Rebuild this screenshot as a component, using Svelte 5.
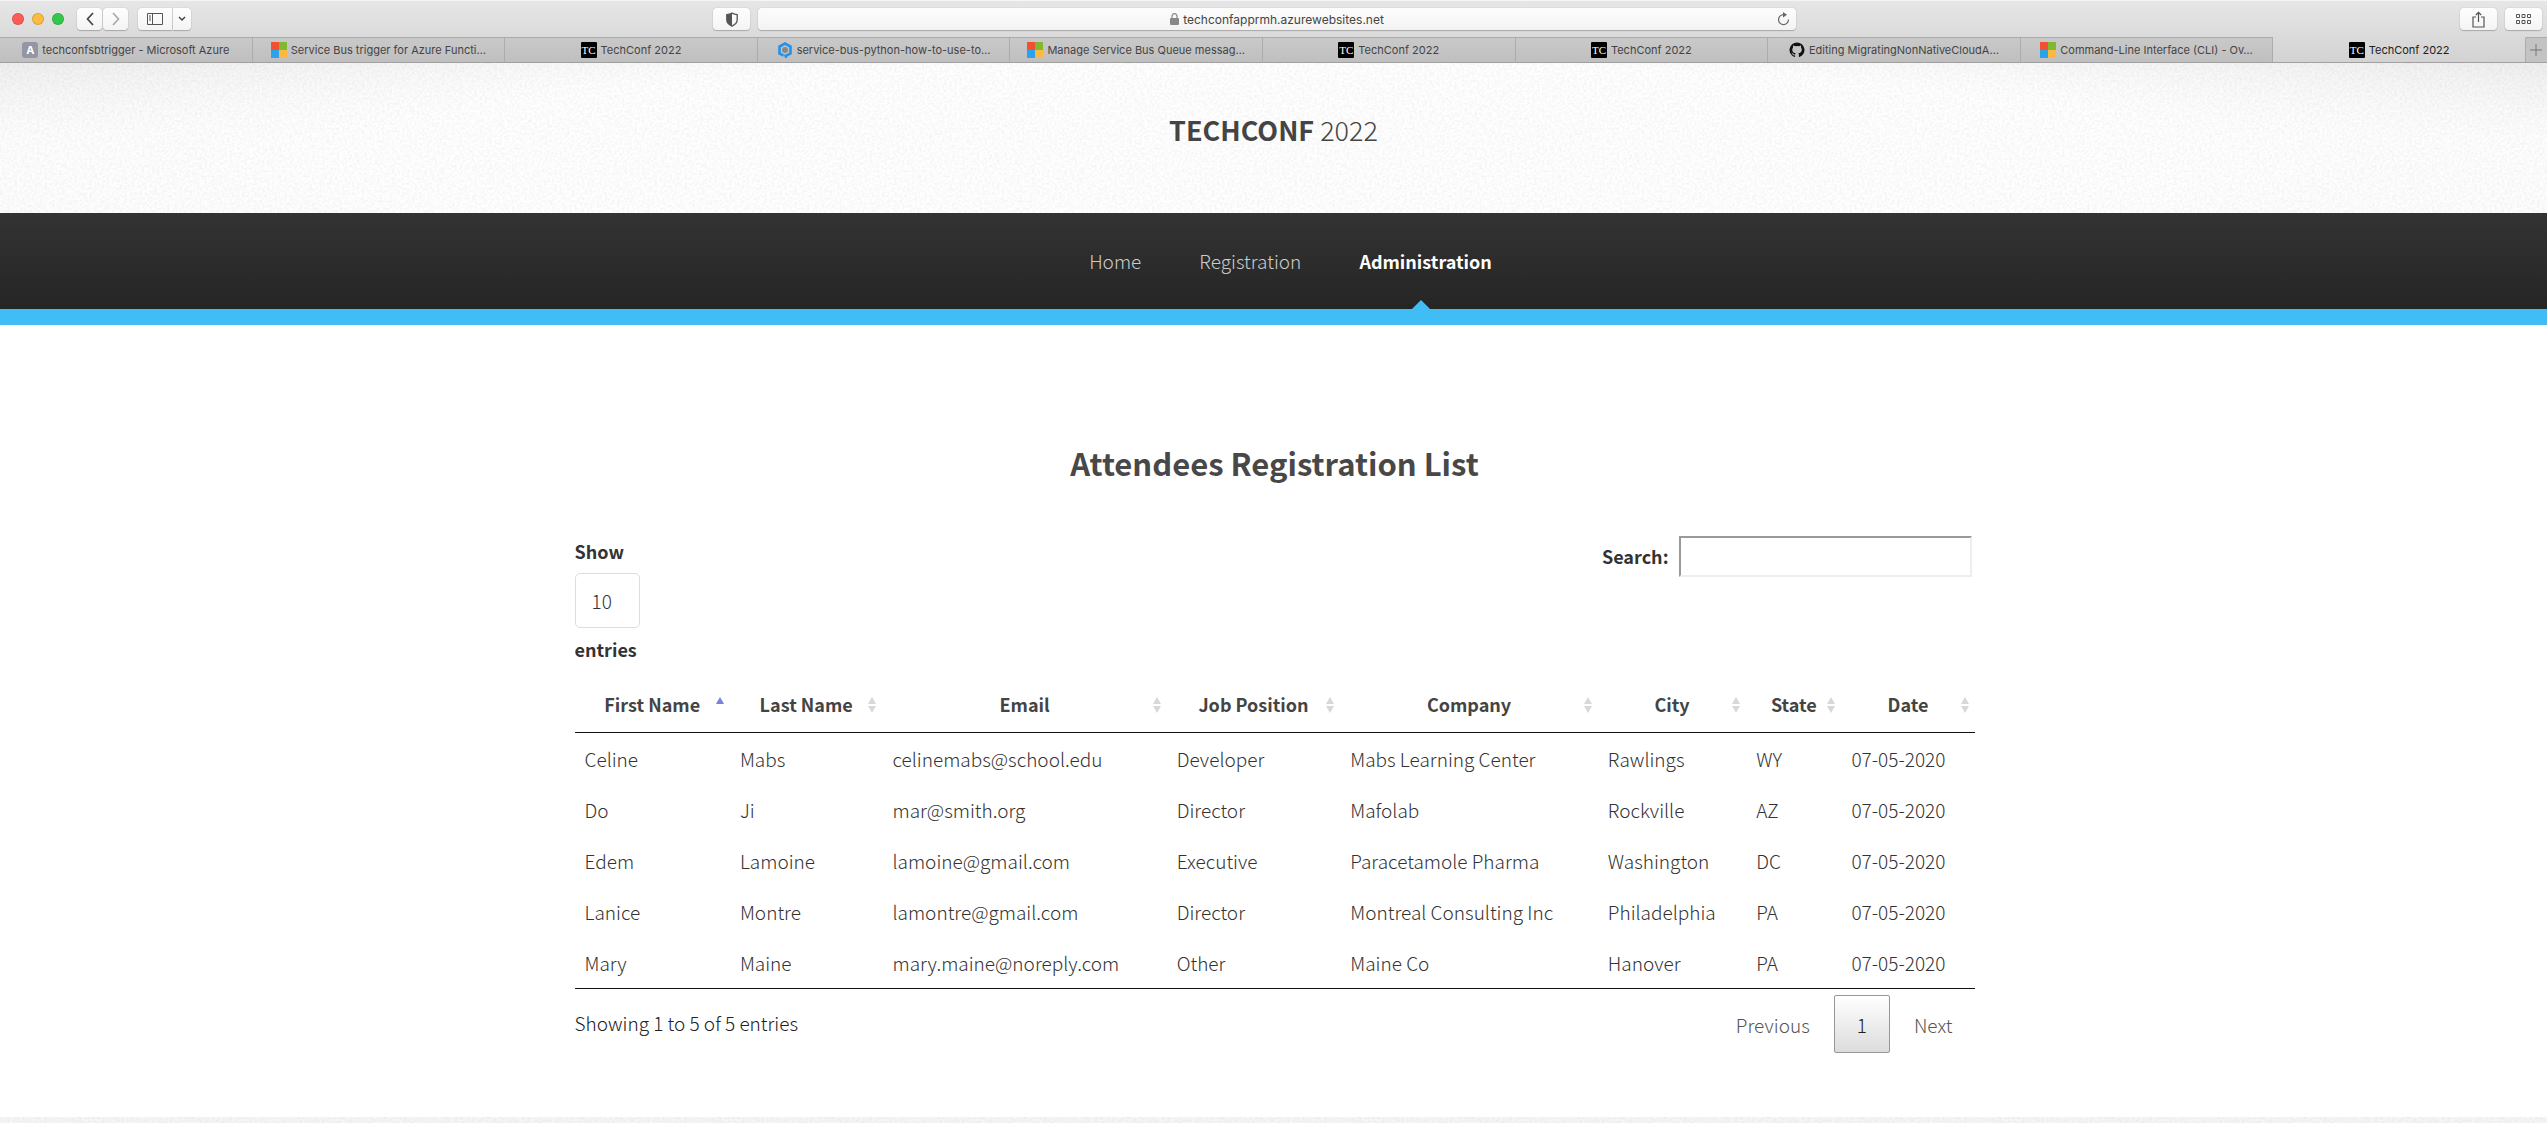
<script>
  const tabs = [
    { icon: 'azure', title: 'techconfsbtrigger - Microsoft Azure' },
    { icon: 'ms', title: 'Service Bus trigger for Azure Functi…' },
    { icon: 'tc', title: 'TechConf 2022' },
    { icon: 'q', title: 'service-bus-python-how-to-use-to…' },
    { icon: 'ms', title: 'Manage Service Bus Queue messag…' },
    { icon: 'tc', title: 'TechConf 2022' },
    { icon: 'tc', title: 'TechConf 2022' },
    { icon: 'gh', title: 'Editing MigratingNonNativeCloudA…' },
    { icon: 'ms', title: 'Command-Line Interface (CLI) - Ov…' },
    { icon: 'tc', title: 'TechConf 2022', active: true }
  ];

  const columns = [
    { key: 'first', label: 'First Name' },
    { key: 'last', label: 'Last Name' },
    { key: 'email', label: 'Email' },
    { key: 'job', label: 'Job Position' },
    { key: 'company', label: 'Company' },
    { key: 'city', label: 'City' },
    { key: 'state', label: 'State' },
    { key: 'date', label: 'Date' }
  ];

  const attendees = [
    { first: 'Celine', last: 'Mabs', email: 'celinemabs@school.edu', job: 'Developer', company: 'Mabs Learning Center', city: 'Rawlings', state: 'WY', date: '07-05-2020' },
    { first: 'Do', last: 'Ji', email: 'mar@smith.org', job: 'Director', company: 'Mafolab', city: 'Rockville', state: 'AZ', date: '07-05-2020' },
    { first: 'Edem', last: 'Lamoine', email: 'lamoine@gmail.com', job: 'Executive', company: 'Paracetamole Pharma', city: 'Washington', state: 'DC', date: '07-05-2020' },
    { first: 'Lanice', last: 'Montre', email: 'lamontre@gmail.com', job: 'Director', company: 'Montreal Consulting Inc', city: 'Philadelphia', state: 'PA', date: '07-05-2020' },
    { first: 'Mary', last: 'Maine', email: 'mary.maine@noreply.com', job: 'Other', company: 'Maine Co', city: 'Hanover', state: 'PA', date: '07-05-2020' }
  ];

  let sortKey = $state('first');
  let ascending = $state(true);
  let query = $state('');

  const rows = $derived(
    attendees
      .filter((a) => Object.values(a).join(' ').toLowerCase().includes(query.toLowerCase()))
      .sort((a, b) => a[sortKey].localeCompare(b[sortKey]) * (ascending ? 1 : -1))
  );

  function sortBy(key) {
    ascending = sortKey === key ? !ascending : true;
    sortKey = key;
  }
</script>

{#snippet grain(id)}
  <svg class="grain" aria-hidden="true">
    <filter {id} x="0" y="0" width="100%" height="100%">
      <feTurbulence type="fractalNoise" baseFrequency="0.4" numOctaves="2" seed="4" />
      <feColorMatrix values="0 0 0 0 0  0 0 0 0 0  0 0 0 0 0  0.09 0 0 0 -0.03" />
    </filter>
    <rect width="100%" height="100%" filter="url(#{id})" />
  </svg>
{/snippet}

<div class="browser">
  <div class="toolbar">
    <div class="tools">
      <div class="lights">
        <span class="light red"></span>
        <span class="light yellow"></span>
        <span class="light green"></span>
      </div>
      <div class="pair">
        <button class="tool narrow" aria-label="Back">
          <svg width="10" height="16" viewBox="0 0 10 16"><path d="M8 2 2.500 8 8 14" fill="none" stroke="#444" stroke-width="1.700" /></svg>
        </button>
        <button class="tool narrow" aria-label="Forward">
          <svg width="10" height="16" viewBox="0 0 10 16"><path d="M2 2 7.500 8 2 14" fill="none" stroke="#aaa" stroke-width="1.700" /></svg>
        </button>
      </div>
      <div class="joined">
        <button class="tool side" aria-label="Sidebar">
          <svg width="16" height="12" viewBox="0 0 16 12" fill="none" stroke="#555"><path d="M.5.5h15v11H.5zM5.500.5v11M2 3h2M2 5h2M2 7h2" /></svg>
        </button>
        <button class="tool drop" aria-label="Sidebar options">
          <svg width="8" height="6" viewBox="0 0 8 6"><path d="m1 1 3 3 3-3" fill="none" stroke="#444" stroke-width="1.500" /></svg>
        </button>
      </div>
      <button class="tool shield" aria-label="Privacy report">
        <svg width="14" height="15" viewBox="0 0 14 15"><path d="M7 1.200c2 1 3.500 1.300 5.200 1.400v5.500c0 2.600-2.200 4.700-5.200 6-3-1.300-5.200-3.400-5.200-6V2.600C3.500 2.500 5 2.200 7 1.200z" fill="none" stroke="#555" stroke-width="1.300" /><path d="M7 1.200v12.900c-3-1.300-5.200-3.400-5.200-6V2.600C3.500 2.500 5 2.200 7 1.200z" fill="#555" /></svg>
      </button>
    </div>
    <div class="address">
      <div class="url">
        <svg width="9" height="12" viewBox="0 0 9 12"><path d="M2 5.500V3.200a2.500 2.500 0 0 1 5 0v2.300" fill="none" stroke="#888" stroke-width="1.200" /><rect y="5" width="9" height="7" rx="1" fill="#888" /></svg>
        <span>techconfapprmh.azurewebsites.net</span>
      </div>
      <button class="reload" aria-label="Reload">
        <svg width="13" height="14" viewBox="0 0 13 14"><path d="M8 2.600H6.500a5 5 0 1 0 5 5" fill="none" stroke="#666" stroke-width="1.200" /><path d="M6 0l4 2.700-4 2.700z" fill="#666" /></svg>
      </button>
    </div>
    <div class="tools end">
      <button class="tool" aria-label="Share">
        <svg width="13" height="17" viewBox="0 0 13 17" fill="none" stroke="#555" stroke-width="1.200"><path d="M4 6H1v10h11V6H9M6.500 11V1.500M3.800 4l2.700-2.700L9.200 4" /></svg>
      </button>
      <button class="tool" aria-label="Tab overview">
        <svg width="15" height="10" viewBox="0 0 15 10" fill="none" stroke="#555"><path d="M.5.5h3v3h-3zM6 .5h3v3H6zM11.500.5h3v3h-3zM.5 6.500h3v3h-3zM6 6.500h3v3H6zM11.500 6.500h3v3h-3z" /></svg>
      </button>
    </div>
  </div>

  <div class="tabs">
    {#each tabs as tab}
      <button class="tab" class:active={tab.active}>
        {#if tab.icon === 'azure'}
          <span class="fav letter">A</span>
        {:else if tab.icon === 'tc'}
          <span class="fav tc">TC</span>
        {:else if tab.icon === 'ms'}
          <svg class="fav" viewBox="0 0 16 16"><path fill="#f25033" d="M0 0h8v8H0z" /><path fill="#7fb932" d="M8 0h8v8H8z" /><path fill="#2ba3ea" d="M0 8h8v8H0z" /><path fill="#fdb840" d="M8 8h8v8H8z" /></svg>
        {:else if tab.icon === 'q'}
          <svg class="fav" viewBox="0 0 16 16"><path fill="none" stroke="#2491eb" stroke-width="2.600" d="M6.500 13.700 2.500 11.500v-7L8 1.500l5.500 3v7L9.500 13.700" /><path d="M7 12.500h3V16H8z" fill="#2491eb" /><circle cx="8" cy="8" r="3" fill="#888" /></svg>
        {:else}
          <svg class="fav" viewBox="0 0 16 16"><path fill="#111" d="M8 .5a7.500 7.500 0 0 0-2.400 14.600c.4.100.500-.200.500-.400v-1.400c-2.100.5-2.500-.9-2.500-.9-.3-.9-.8-1.100-.8-1.100-.7-.5.100-.5.100-.5.700.1 1.100.8 1.100.8.700 1.200 1.800.8 2.200.6.100-.5.300-.8.500-1-1.700-.2-3.400-.8-3.400-3.700 0-.8.300-1.500.8-2-.1-.2-.3-1 .1-2 0 0 .6-.2 2 .8a7 7 0 0 1 3.700 0c1.400-1 2-.8 2-.8.4 1 .2 1.800.1 2 .5.5.8 1.200.8 2 0 2.900-1.800 3.500-3.400 3.700.300.2.5.7.5 1.400v2.100c0 .2.100.5.500.4A7.500 7.500 0 0 0 8 .5z" /></svg>
        {/if}
        <span class="name">{tab.title}</span>
      </button>
    {/each}
    <button class="add" aria-label="New tab">
      <svg width="12" height="12" viewBox="0 0 12 12"><path d="M6 0v12M0 6h12" stroke="#777" /></svg>
    </button>
  </div>
</div>

<div class="page">
  <header>
    {@render grain('grain-header')}
    <a class="logo" href="#home"><strong>TECHCONF</strong> 2022</a>
  </header>
  <nav>
    <a href="#home">Home</a>
    <a href="#registration">Registration</a>
    <a class="current" href="#administration">Administration</a>
  </nav>
  <div class="stripe"></div>

  <main>
    <h1>Attendees Registration List</h1>
    <div class="controls">
      <label class="length">
        <span>Show</span>
        <select><option>10</option><option>25</option><option>50</option><option>100</option></select>
        <span>entries</span>
      </label>
      <label class="search">
        <span>Search:</span>
        <input type="search" bind:value={query} />
      </label>
    </div>

    <table>
      <colgroup>
        {#each columns as column}<col class={column.key} />{/each}
      </colgroup>
      <thead>
        <tr>
          {#each columns as column}
            <th>
              <button class="sort" onclick={() => sortBy(column.key)}>
                {column.label}
                <svg class="arrows" viewBox="0 0 8 16" aria-hidden="true">
                  {#if sortKey === column.key}
                    <path d={ascending ? 'M0 7h8L4 0z' : 'M0 9h8l-4 7z'} fill="#7b81dc" />
                  {:else}
                    <path d="M0 7h8L4 0zM0 9h8l-4 7z" fill="#d8d8d8" />
                  {/if}
                </svg>
              </button>
            </th>
          {/each}
        </tr>
      </thead>
      <tbody>
        {#each rows as row}
          <tr>
            {#each columns as column}<td>{row[column.key]}</td>{/each}
          </tr>
        {/each}
      </tbody>
    </table>

    <div class="summary">
      <span class="info">Showing 1 to 5 of 5 entries</span>
      <div class="pager">
        <button>Previous</button>
        <button class="on">1</button>
        <button>Next</button>
      </div>
    </div>
  </main>
  <footer>{@render grain('grain-footer')}</footer>
</div>

<style>
  :global(body) {
    margin: 0;
    background: #fff;
  }
  :global(#app) {
    min-height: 100vh;
    display: flex;
    flex-direction: column;
  }
  * {
    box-sizing: border-box;
  }
  button {
    border: 0;
    margin: 0;
    padding: 0;
    background: none;
    font: inherit;
    color: inherit;
  }
  a {
    text-decoration: none;
  }

  .browser {
    font-family: Inter, 'Liberation Sans', sans-serif;
    font-size: 11px;
    color: #444;
    background: linear-gradient(#e6e6e6, #d2d2d2);
    border-top: 1px solid #f5f5f5;
  }
  .toolbar {
    height: 36px;
    display: grid;
    grid-template-columns: 1fr minmax(0, 1038px) 1fr;
    gap: 8px;
    align-items: center;
    padding: 0 5px 0 12px;
  }
  .tools {
    display: flex;
    align-items: center;
    gap: 10px;
  }
  .end {
    justify-content: flex-end;
    gap: 8px;
  }
  .lights {
    display: flex;
    gap: 8px;
    margin-right: 3px;
  }
  .light {
    width: 12px;
    height: 12px;
    border-radius: 50%;
    border: 1px solid #0002;
  }
  .red { background: #fc5b57; }
  .yellow { background: #fdbc40; }
  .green { background: #34c84a; }
  .pair {
    display: flex;
    gap: 1px;
  }
  .joined {
    display: flex;
    gap: 1px;
  }
  .tool {
    width: 37px;
    height: 22px;
    display: flex;
    align-items: center;
    justify-content: center;
    background: linear-gradient(#fefefe, #f4f4f4);
    border-radius: 4px;
    box-shadow: 0 0 1px #999, 0 1px 1px #aaa;
  }
  .narrow { width: 25px; }
  .side {
    width: 34px;
    border-radius: 4px 0 0 4px;
  }
  .drop {
    width: 18px;
    border-radius: 0 4px 4px 0;
  }
  .shield { margin-left: auto; }
  .address {
    height: 22px;
    display: flex;
    align-items: center;
    padding: 0 6px 0 19px;
    background: linear-gradient(#fdfdfd, #f3f3f3);
    border-radius: 4px;
    box-shadow: 0 0 1px #999, 0 1px 1px #aaa;
  }
  .url {
    flex: 1;
    display: flex;
    align-items: center;
    justify-content: center;
    gap: 4px;
    font-size: 12px;
  }
  .reload { display: flex; }

  .tabs {
    display: flex;
    height: 26px;
    border-bottom: 1px solid #a0a0a0;
  }
  .tab {
    flex: 1;
    min-width: 0;
    display: flex;
    align-items: center;
    justify-content: center;
    gap: 4px;
    padding: 0 16px;
    background: linear-gradient(#c9c9c9, #bfbfbf);
    border-top: 1px solid #acacac;
    border-right: 1px solid #acacac;
  }
  .tab.active {
    background: none;
    border-top-color: transparent;
    color: #222;
  }
  .name {
    white-space: nowrap;
  }
  .fav {
    flex: none;
    width: 16px;
    height: 16px;
  }
  .letter,
  .tc {
    display: grid;
    place-items: center;
    border-radius: 3px;
    background: #9596a3;
    color: #fff;
    font-weight: 700;
    line-height: 16px;
  }
  .tc {
    border-radius: 1px;
    background: #000;
    font-family: 'Liberation Serif', serif;
    font-weight: 400;
  }
  .add {
    width: 21px;
    display: grid;
    place-items: center;
    background: #c3c3c3;
    border-top: 1px solid #acacac;
  }

  .page {
    flex: 1;
    display: flex;
    flex-direction: column;
    font-family: 'Noto Sans CJK SC', 'Open Sans', sans-serif;
    font-size: 19px;
    font-weight: 300;
    line-height: 31px;
    color: #333;
  }
  header {
    position: relative;
    height: 150px;
    display: flex;
    justify-content: center;
    padding-top: 45px;
    background: radial-gradient(ellipse 60% 100% at 50% 60%, #fff 60%, #fff0), linear-gradient(#efefef, #fdfdfd 50%);
  }
  .grain {
    position: absolute;
    inset: 0;
    width: 100%;
    height: 100%;
  }
  .logo {
    position: relative;
    font-size: 27px;
    line-height: 44px;
    color: #444;
  }
  .logo strong {
    font-weight: 700;
  }
  nav {
    display: flex;
    justify-content: center;
    gap: 58px;
    padding-left: 34px;
    background: linear-gradient(#333, #252525);
  }
  nav a {
    position: relative;
    line-height: 96px;
    color: #ccc;
  }
  nav .current {
    font-size: 18px;
    font-weight: 700;
    color: #fff;
  }
  nav .current::after {
    content: '';
    position: absolute;
    bottom: 0;
    left: 50%;
    margin-left: -14px;
    border: 9px solid transparent;
    border-top: 0;
    border-bottom-color: #40bdf5;
  }
  .stripe {
    height: 16px;
    background: #40bdf5;
  }

  main {
    width: 100%;
    max-width: 1402px;
    margin: 0 auto;
    padding: 112px 0 64px 2px;
  }
  h1 {
    margin: 0 0 47px;
    font-size: 31px;
    line-height: 52px;
    font-weight: 700;
    color: #484848;
    text-align: center;
  }
  .controls {
    display: flex;
    justify-content: space-between;
    align-items: flex-start;
    font-size: 18px;
    font-weight: 700;
    color: #333;
  }
  .length {
    display: flex;
    flex-direction: column;
    align-items: flex-start;
    gap: 6px;
  }
  select {
    appearance: none;
    width: 65px;
    height: 55px;
    padding: 0 16px;
    border: 1px solid #ddd;
    border-radius: 5px;
    background: #fff;
    font: inherit;
    font-size: 19px;
    font-weight: 300;
    color: #333;
  }
  .search {
    display: flex;
    align-items: center;
    gap: 10px;
    padding-right: 3px;
  }
  .search input {
    width: 293px;
    height: 41px;
    padding: 0 8px;
    border: 2px solid;
    border-color: #999 #eee #eee #999;
    background: #fff;
    font: inherit;
    font-weight: 300;
    outline: 0;
  }

  table {
    width: 100%;
    margin-top: 12px;
    table-layout: fixed;
    border-collapse: separate;
    border-spacing: 0;
    border-bottom: 1px solid #111;
  }
  .first { width: 11.1%; }
  .last { width: 10.9%; }
  .email { width: 20.3%; }
  .job { width: 12.4%; }
  .company { width: 18.4%; }
  .city { width: 10.6%; }
  .state { width: 6.8%; }
  .date { width: 9.5%; }
  th {
    padding: 0;
    border-bottom: 1px solid #111;
  }
  .sort {
    position: relative;
    width: 100%;
    padding: 12px 0;
    font-size: 18px;
    font-weight: 700;
    color: #444;
    white-space: nowrap;
  }
  .arrows {
    position: absolute;
    top: 50%;
    right: 6px;
    width: 8px;
    height: 16px;
    margin-top: -8px;
  }
  td {
    padding: 10px;
    white-space: nowrap;
  }
  .summary {
    display: flex;
    justify-content: space-between;
    align-items: flex-start;
    padding-top: 6px;
    color: #222;
  }
  .info {
    padding-top: 12px;
  }
  .pager {
    display: flex;
    gap: 2px;
    color: #555;
  }
  .pager button {
    min-width: 55px;
    height: 58px;
    padding: 0 22px;
  }
  .pager .on {
    border: 1px solid #979797;
    border-radius: 2px;
    background: linear-gradient(#fff, #dcdcdc);
    color: #222;
  }
  footer {
    position: relative;
    flex: 1;
    min-height: 6px;
    background: #f6f6f6;
  }
</style>
